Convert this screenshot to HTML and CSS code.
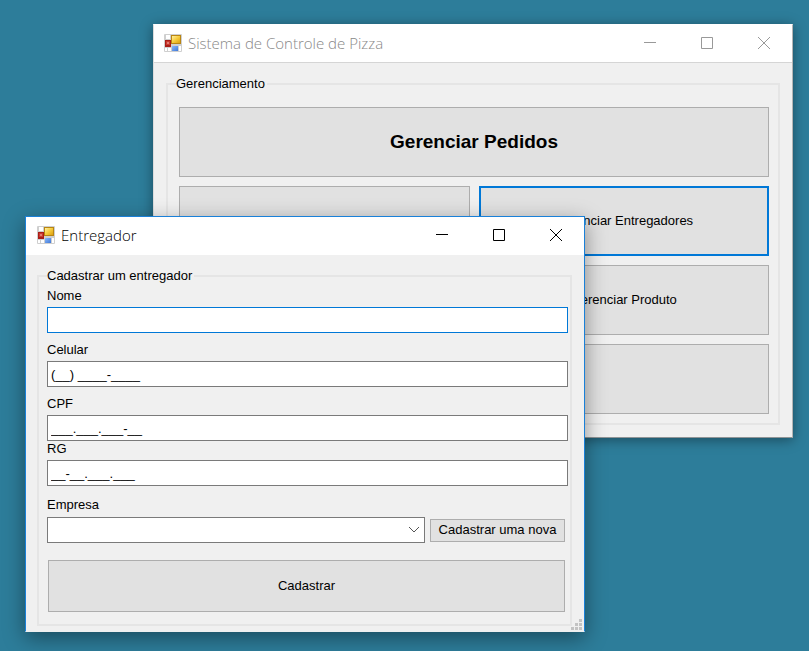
FILE: index.html
```html
<!DOCTYPE html>
<html lang="pt-BR">
<head>
<meta charset="utf-8">
<title>Sistema de Controle de Pizza</title>
<link rel="stylesheet" href="styles.css">
</head>
<body>
<svg width="0" height="0" class="sprite" aria-hidden="true">
  <defs>
    <linearGradient id="gold" x1="0" y1="0" x2="1" y2="1"><stop offset="0" stop-color="#fff0a0"/><stop offset=".5" stop-color="#f6cb3c"/><stop offset="1" stop-color="#dca010"/></linearGradient>
    <linearGradient id="blue" x1="0" y1="0" x2="1" y2="1"><stop offset="0" stop-color="#8ab8fa"/><stop offset="1" stop-color="#3f78d8"/></linearGradient>
    <symbol id="app" viewBox="0 0 18 18">
      <rect width="18" height="18" rx="1" fill="#cfcfcf"/>
      <path d="M2 1h4v4H2zM1 14h2v3H1zM4 14h3v3H4zM15 12h2v5h-2z" fill="#fff"/>
      <rect x="1" y="6" width="6" height="7" fill="#a91d17"/>
      <rect x="2" y="7" width="4" height="4" fill="#c93a30"/>
      <rect x="3" y="8" width="2" height="2" fill="#e27a70"/>
      <rect x="7" y="1" width="10" height="9" fill="#b98512"/>
      <rect x="8" y="2" width="8" height="7" fill="url(#gold)"/>
      <rect x="8" y="12" width="6" height="5" fill="url(#blue)"/>
    </symbol>
    <symbol id="min" viewBox="0 0 12 12"><path d="M0 5.5h12" stroke="currentColor" fill="none"/></symbol>
    <symbol id="max" viewBox="0 0 12 12"><path d="M.5.5h11v11H.5z" stroke="currentColor" fill="none"/></symbol>
    <symbol id="close" viewBox="0 0 12 12"><path d="M0 0l12 12M12 0L0 12" stroke="currentColor" fill="none"/></symbol>
  </defs>
</svg>

<main class="desktop">
  <section class="window window-main" aria-label="Sistema de Controle de Pizza">
    <header class="titlebar">
      <svg class="app-icon" aria-hidden="true"><use href="#app"/></svg>
      <h1 class="title">Sistema de Controle de Pizza</h1>
      <button class="caption" aria-label="Minimizar"><svg><use href="#min"/></svg></button>
      <button class="caption" aria-label="Maximizar"><svg><use href="#max"/></svg></button>
      <button class="caption" aria-label="Fechar"><svg><use href="#close"/></svg></button>
    </header>
    <div class="client">
      <fieldset class="group">
        <legend>Gerenciamento</legend>
        <div class="menu">
          <button class="btn wide strong">Gerenciar Pedidos</button>
          <button class="btn">Gerenciar Clientes</button>
          <button class="btn active">Gerenciar Entregadores</button>
          <button class="btn second">Gerenciar Produto</button>
          <button class="btn wide" aria-label="Gerenciamento"></button>
        </div>
      </fieldset>
    </div>
  </section>

  <section class="window window-dialog" aria-label="Entregador">
    <header class="titlebar">
      <svg class="app-icon" aria-hidden="true"><use href="#app"/></svg>
      <h2 class="title">Entregador</h2>
      <button class="caption" aria-label="Minimizar"><svg><use href="#min"/></svg></button>
      <button class="caption" aria-label="Maximizar"><svg><use href="#max"/></svg></button>
      <button class="caption" aria-label="Fechar"><svg><use href="#close"/></svg></button>
    </header>
    <div class="client">
      <fieldset class="group">
        <legend>Cadastrar um entregador</legend>
        <form class="form">
          <div class="field">
            <label for="nome">Nome</label>
            <input class="text focused" id="nome" type="text">
          </div>
          <div class="field">
            <label for="celular">Celular</label>
            <input class="text" id="celular" type="text" value="(__) ____-____">
          </div>
          <div class="field">
            <label for="cpf">CPF</label>
            <input class="text" id="cpf" type="text" value="___.___.___-__">
          </div>
          <div class="field tight">
            <label for="rg">RG</label>
            <input class="text" id="rg" type="text" value="__-__.___.___">
          </div>
          <div class="field spaced">
            <label for="empresa">Empresa</label>
            <div class="company">
              <div class="combo">
                <select id="empresa"><option></option></select>
                <svg class="chevron" viewBox="0 0 12 8" aria-hidden="true"><path d="M1 1l5 5 5-5"/></svg>
              </div>
              <button class="btn small" type="button">Cadastrar uma nova</button>
            </div>
          </div>
          <button class="btn submit" type="button">Cadastrar</button>
        </form>
      </fieldset>
    </div>
    <svg class="grip" viewBox="0 0 12 12" aria-hidden="true"><path d="M8 0h3v3H8zM4 4h3v3H4zM8 4h3v3H8zM0 8h3v3H0zM4 8h3v3H4zM8 8h3v3H8z"/></svg>
  </section>
</main>
</body>
</html>
```
FILE: styles.css
```css
* { box-sizing: border-box; }

body {
  margin: 0;
  background: #2d7d9a;
  color: #000;
  font: 13px/16px "Liberation Sans", Arial, sans-serif;
}

button, input, select { font: inherit; color: inherit; }

.sprite { position: absolute; }

.desktop {
  position: relative;
  min-height: 100vh;
  overflow: hidden;
}

.window {
  position: absolute;
  background: #f0f0f0;
  border: 1px solid;
}

.window-main {
  top: 24px;
  left: 153px;
  right: 16px;
  border-color: #fff #b4b4b4 #8f9496 #dcdcdc;
  box-shadow: 0 2px 12px rgba(0, 0, 0, .4);
}

.window-dialog {
  top: 216px;
  left: 25px;
  right: 224px;
  border-color: #1a80d8;
  border-bottom-color: #f0f0f0;
  box-shadow: 0 6px 20px rgba(0, 0, 0, .4);
}

.titlebar {
  display: flex;
  align-items: center;
  height: 38px;
  padding: 0 0 2px 11px;
  background: #fff;
}

.window-main .titlebar {
  padding-left: 10px;
  color: #999;
  border-bottom: 1px solid #d5d5d5;
}

.window-dialog .titlebar { color: #000; }

.app-icon { width: 18px; height: 18px; }

.title {
  flex: 1;
  margin: 0 0 0 6px;
  font: 300 15px/20px "Open Sans", "Noto Sans", sans-serif;
}

.window-main .title { color: #888; }

.caption {
  width: 57px;
  height: 100%;
  padding: 0;
  border: 0;
  background: none;
  display: grid;
  place-items: center;
}

.caption svg { width: 12px; height: 12px; }

.client { padding: 13px 12px 12px; }

.group {
  min-width: 0;
  margin: 0;
  padding: 0 8px 9px;
  border: 2px solid #e5e5e5;
}

legend { padding: 0 2px 0 0; }

.menu {
  display: grid;
  grid-template-columns: 1fr 1fr;
  grid-auto-rows: 70px;
  gap: 9px;
  padding: 15px 1px 0 3px;
}

.btn {
  padding: 0;
  background: #e1e1e1;
  border: 1px solid #adadad;
}

.wide { grid-column: 1 / -1; }
.second { grid-column: 2; }
.strong { font-size: 19px; font-weight: bold; }
.active { border: 2px solid #0078d7; }

.window-dialog .client { padding: 13px 12px 5px 11px; }
.window-dialog .group { padding: 0 2px 12px 8px; }

.form { display: flex; flex-direction: column; gap: 9px; padding-top: 4px; }

.field { display: flex; flex-direction: column; gap: 3px; }
.field.tight { margin-top: -9px; }
.field.spaced { margin-top: 2px; gap: 4px; }

.text, .combo select {
  width: 100%;
  height: 26px;
  padding: 0 3px;
  background: #fff;
  border: 1px solid #7a7a7a;
  border-radius: 0;
  outline: 0;
}

.text.focused { border-color: #0078d7; }

.company { display: flex; align-items: center; gap: 5px; padding-right: 3px; }
.combo { position: relative; flex: 1; display: flex; }
.combo select { appearance: none; }

.chevron {
  position: absolute;
  right: 5px;
  top: 9px;
  width: 12px;
  height: 8px;
  fill: none;
  stroke: #555;
  pointer-events: none;
}

.small { width: 135px; height: 23px; }
.submit { height: 52px; margin: 8px 3px 0 1px; }

.grip {
  position: absolute;
  right: 1px;
  bottom: 0;
  width: 12px;
  height: 12px;
  fill: #c3c3c3;
}
```
